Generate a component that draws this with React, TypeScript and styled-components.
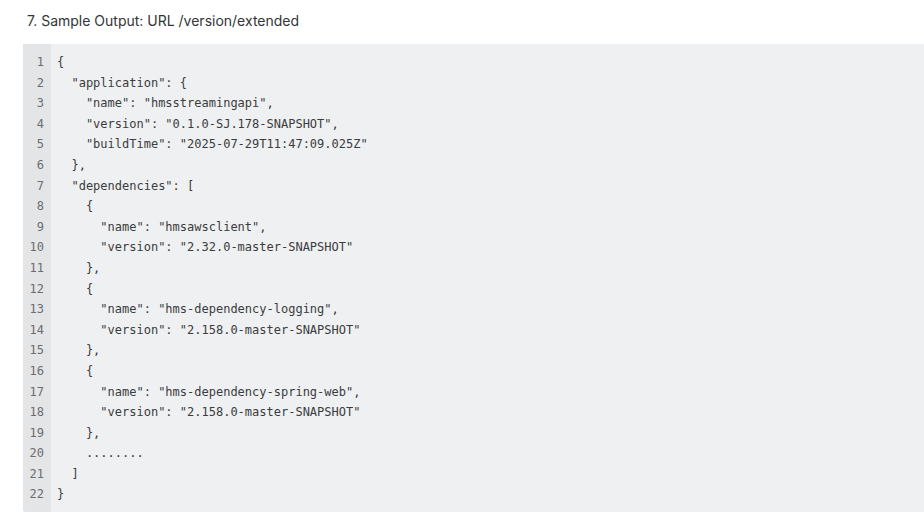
import React from "react";
import styled, { createGlobalStyle } from "styled-components";

const Global = createGlobalStyle`
  html, body { margin: 0; padding: 0; background: #ffffff; }
  body { font-family: Inter, "Noto Sans", sans-serif; }
`;

const Page = styled.div`
  padding: 11px 0 0 23px;
  display: flex;
  flex-direction: column;
  gap: 13px;
`;

const Title = styled.div`
  font-family: Inter, "Noto Sans", sans-serif;
  font-size: 14px;
  line-height: 20px;
  color: #333538;
  padding-left: 4px;
`;

const CodeBlock = styled.div`
  display: flex;
  background: #eff0f1;
  border-radius: 0 0 0 3px;
  overflow: hidden;
  font-family: "DejaVu Sans Mono", "Liberation Mono", monospace;
  font-size: 12px;
  line-height: 20.6px;
`;

const Gutter = styled.div`
  background: #e4e5e7;
  width: 21px;
  padding: 8px 7px 7px 0;
  box-sizing: content-box;
  text-align: right;
  color: #6b6d70;
  flex-shrink: 0;
`;

const Code = styled.pre`
  margin: 0;
  padding: 8px 0 7px 6px;
  color: #3a3c40;
  font: inherit;
  white-space: pre;
  flex: 1;
`;

const Line = styled.div`
  height: 20.6px;
`;

const lines = [
  "{",
  '  "application": {',
  '    "name": "hmsstreamingapi",',
  '    "version": "0.1.0-SJ.178-SNAPSHOT",',
  '    "buildTime": "2025-07-29T11:47:09.025Z"',
  "  },",
  '  "dependencies": [',
  "    {",
  '      "name": "hmsawsclient",',
  '      "version": "2.32.0-master-SNAPSHOT"',
  "    },",
  "    {",
  '      "name": "hms-dependency-logging",',
  '      "version": "2.158.0-master-SNAPSHOT"',
  "    },",
  "    {",
  '      "name": "hms-dependency-spring-web",',
  '      "version": "2.158.0-master-SNAPSHOT"',
  "    },",
  "    ........",
  "  ]",
  "}",
];

export default function App() {
  return (
    <>
      <Global />
      <Page>
        <Title>7. Sample Output: URL /version/extended</Title>
        <CodeBlock>
          <Gutter>
            {lines.map((_, i) => (
              <Line key={i}>{i + 1}</Line>
            ))}
          </Gutter>
          <Code>
            {lines.map((l, i) => (
              <Line key={i}>{l}</Line>
            ))}
          </Code>
        </CodeBlock>
      </Page>
    </>
  );
}
